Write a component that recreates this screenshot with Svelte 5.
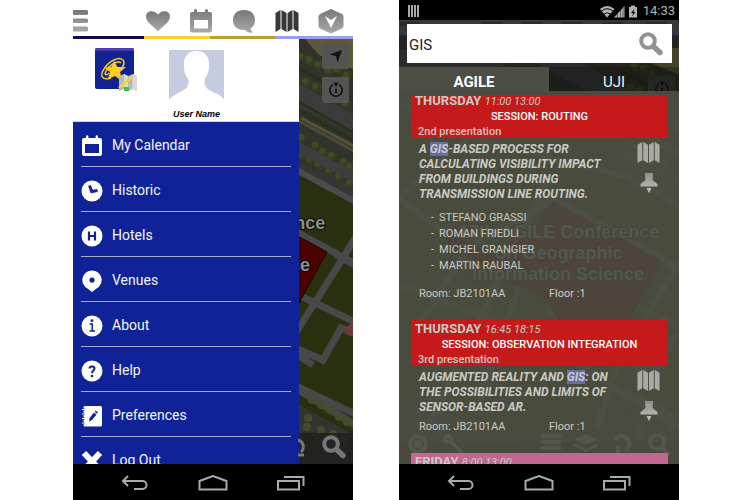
<script>
  const menu = [
    ['calendar', 'My Calendar'],
    ['clock', 'Historic'],
    ['hotel', 'Hotels'],
    ['venue', 'Venues'],
    ['info', 'About'],
    ['help', 'Help'],
    ['prefs', 'Preferences'],
    ['logout', 'Log Out']
  ];

  const talks = [
    {
      day: 'THURSDAY',
      time: '11:00 13:00',
      session: 'SESSION: ROUTING',
      order: '2nd presentation',
      title: ['A ', 'GIS', '-BASED PROCESS FOR CALCULATING VISIBILITY IMPACT FROM BUILDINGS DURING TRANSMISSION LINE ROUTING.'],
      authors: ['STEFANO GRASSI', 'ROMAN FRIEDLI', 'MICHEL GRANGIER', 'MARTIN RAUBAL'],
      room: 'JB2101AA',
      floor: '1'
    },
    {
      day: 'THURSDAY',
      time: '16:45 18:15',
      session: 'SESSION: OBSERVATION INTEGRATION',
      order: '3rd presentation',
      title: ['AUGMENTED REALITY AND ', 'GIS', ': ON THE POSSIBILITIES AND LIMITS OF SENSOR-BASED AR.'],
      authors: [],
      room: 'JB2101AA',
      floor: '1'
    }
  ];

  const trees = [
    [222, 49], [228, 57], [237, 60], [246, 65], [256, 71], [264, 70], [274, 76],
    [224, 79], [233, 82], [243, 87], [253, 92], [262, 99], [273, 104],
    [222, 135], [229, 138], [243, 146], [250, 152], [259, 156], [271, 162], [277, 167],
    [228, 155], [237, 160], [246, 165], [256, 171], [266, 177], [277, 183]
  ];
  const lowerTrees = [
    [239, 400], [248, 405], [257, 410], [266, 417], [274, 422],
    [235, 418], [234, 427], [248, 430], [260, 434], [271, 440]
  ];

  let query = $state('GIS');
</script>

{#snippet map(shift)}
  <svg class="map" viewBox="0 0 280 500" preserveAspectRatio="xMinYMin slice" aria-hidden="true">
    <g transform={shift}>
      <rect x="-20" y="-20" width="340" height="540" fill="#353633" />
      <path d="M-20 20L300 20V190L190 150L-20 40Z" fill="#30332a" />
      <path d="M232 39h48v30l-34-14z" fill="#5d5a37" />
      <path d="M-20 40L150 40L290 120V140L120 50L-20 90Z" fill="#3b3b3b" />
      <path d="M215 62L290 104M215 96L290 138M215 104L290 146" stroke="#26301a" stroke-width="3" />
      <path d="M215 115L290 156" stroke="#4d4b35" stroke-width="3" />
      <path d="M228 118L290 151" stroke="#56533a" stroke-width="3" />
      {#each trees as [x, y]}
        <circle cx={x} cy={y} r="5" fill="#333d1e" />
        <circle cx={x - 1} cy={y - 1} r="3" fill="#404a25" />
      {/each}
      <path d="M215 142L290 182" stroke="#3d3d3e" stroke-width="10" />
      <path d="M-20 110L190 150L290 205V500L-20 380Z" fill="#283010" />
      <path d="M-20 90L70 130L220 168L290 206" fill="none" stroke="#4b4b4b" stroke-width="6" />
      <path d="M-20 200L60 130M20 420L140 170M-20 180L60 240L146 190L290 268M-20 270L130 330L290 430M60 240L10 320M112 277L70 400M140 300L240 365M296 215L270 258L212 350L190 420M215 290L290 326M215 345L250 360L268 328L290 335M200 375L290 418M262 254L290 270" fill="none" stroke="#484848" stroke-width="7" />
      <path d="M205 393L290 440V500H170Z" fill="#33332f" />
      <path d="M146 193L254 252L225 305L212 330L152 311L138 289L123 279L110 277L41 234L43 226L88 246L123 226Z" fill="#4b0202" stroke="#190505" />
      <path d="M274 327L284 317V338L272 334Z" fill="#70393a" />
      {#each lowerTrees as [x, y]}
        <circle cx={x} cy={y} r="4" fill="#434d2a" />
      {/each}
      <g class="map-label">
        <text x="152" y="229">17th AGILE Conference</text>
        <text x="152" y="250">on Geographic</text>
        <text x="151" y="271">Information Science</text>
      </g>
      <path d="M-20 433H300V520H-20Z" fill="#20201e" opacity=".85" />
    </g>
  </svg>
{/snippet}

{#snippet lens(size)}
  <svg width={size} height={size} viewBox="0 0 24 24" aria-hidden="true">
    <circle cx="9" cy="9" r="6.8" fill="none" stroke="currentColor" stroke-width="4" />
    <path d="M14.5 14.5L21 20.500" stroke="currentColor" stroke-width="5.500" stroke-linecap="round" />
  </svg>
{/snippet}

{#snippet folded(size)}
  <svg width={size} height={size} viewBox="0 0 24 24" aria-hidden="true">
    <path d="M.5 4L5.5 1V20L.5 23zM6.5 1L11.5 4V23L6.5 20zM12.5 4L17.5 1V20L12.5 23zM18.5 1L23.5 4V23L18.5 20z" fill="currentColor" />
  </svg>
{/snippet}

{#snippet compass()}
  <svg width="18" height="18" viewBox="0 0 18 18" aria-hidden="true">
    <path d="M6 3.6A6.2 6.2 0 1 0 12 3.6" fill="none" stroke="currentColor" stroke-width="1.6" />
    <path d="M6.5 1.5h5L9 6zM8 8h2v4H8z" fill="currentColor" />
  </svg>
{/snippet}

{#snippet navbar()}
  <nav class="android" aria-label="System">
    <button aria-label="Back">
      <svg width="28" height="16" viewBox="0 0 28 16"><path d="M7 1L2 6L7 11M2 6H21.5A4 4 0 0 1 21.5 14H13" /></svg>
    </button>
    <button aria-label="Home">
      <svg width="30" height="16" viewBox="0 0 30 16"><path d="M1.5 14.5V6L15 1L28.5 6V14.5Z" /></svg>
    </button>
    <button aria-label="Recent apps">
      <svg width="28" height="16" viewBox="0 0 28 16"><path d="M1 6H22V14.5H1ZM7 2H26.5V11" /></svg>
    </button>
  </nav>
{/snippet}

{#snippet menuIcon(kind)}
  <svg width="22" height="22" viewBox="0 0 22 22" aria-hidden="true">
    {#if kind === 'calendar'}
      <path d="M3 3H5V1.5a1 1 0 0 1 2.4 0V3h7.200V1.500a1 1 0 0 1 2.400 0V3H19a2 2 0 0 1 2 2V19a2 2 0 0 1-2 2H3a2 2 0 0 1-2-2V5a2 2 0 0 1 2-2zM4 9V18H18V9z" fill="#fff" fill-rule="evenodd" />
    {:else if kind === 'venue'}
      <path d="M11 .5A9.600 9.600 0 0 1 15.500 18.600L11 22L6.500 18.600A9.600 9.600 0 0 1 11 .5zM11 7.500a2.600 2.600 0 1 0 .1 0z" fill="#fff" fill-rule="evenodd" />
    {:else if kind === 'prefs'}
      <path d="M4 1H19.500A1.500 1.500 0 0 1 21 2.500V20A1.500 1.500 0 0 1 19.500 21.500H4A1.500 1.500 0 0 1 2.500 20V2.500A1.500 1.500 0 0 1 4 1z" fill="#fff" />
      <path d="M0 4.500H3.500M0 9H3.500M0 13.500H3.500M0 18H3.500" stroke="#102298" stroke-width="2.400" />
      <path d="M1 4.500H5M1 9H5M1 13.500H5M1 18H5" stroke="#fff" />
      <path d="M8 16.500L8.500 13L13 7.500L15.500 9.500L11 15zM13.700 6.700L14.700 5.600L17 7.500L16.200 8.700z" fill="#102298" />
    {:else if kind === 'logout'}
      <path d="M3 3L19 20M19 3L3 20" stroke="#fff" stroke-width="6" />
    {:else}
      <circle cx="11" cy="11" r="10.500" fill="#fff" />
      {#if kind === 'clock'}
        <path d="M8.500 5.500L10.700 11.500L16.500 10.500" fill="none" stroke="#102298" stroke-width="3" />
      {:else if kind === 'hotel'}
        <path d="M8 6.500V15.500M14 6.500V15.500M8 11H14" stroke="#102298" stroke-width="2.200" />
      {:else if kind === 'info'}
        <path d="M8.500 9H11.200V16M8.500 16H14" fill="none" stroke="#102298" stroke-width="1.500" />
        <circle cx="11" cy="5.700" r="1.400" fill="#102298" />
      {:else}
        <path d="M8.500 8.500C8.500 5.800 13.500 5.800 13.500 8.500C13.500 10.500 11 10.600 11 13.200" fill="none" stroke="#102298" stroke-width="2" />
        <circle cx="11" cy="16" r="1.300" fill="#102298" />
      {/if}
    {/if}
  </svg>
{/snippet}

<svg class="defs" width="0" height="0" aria-hidden="true">
  <linearGradient id="metal" x2="0" y2="1"><stop stop-color="#777" /><stop offset="1" stop-color="#aaa" /></linearGradient>
  <linearGradient id="pale" x2="0" y2="1"><stop stop-color="#8d8e88" /><stop offset="1" stop-color="#c4c5be" /></linearGradient>
</svg>

<main>
  <section class="phone" aria-label="Main menu">
    <header class="toolbar">
      <button class="burger" aria-label="Menu">
        <svg width="15" height="22" viewBox="0 0 15 22"><path d="M0 0H13a2 2 0 0 1 0 5H0zM0 8.500H13a2 2 0 0 1 0 4.500H0zM0 16.500H13a2 2 0 0 1 0 5H0z" fill="url(#metal)" /></svg>
      </button>
      <div class="tools">
        <button aria-label="Favourites">
          <svg width="24" height="24" viewBox="0 0 24 24"><path d="M12 22.500C9 18 0 14 0 7.500C0 1 8.500 .5 12 5.500C15.500 .5 24 1 24 7.500C24 14 15 18 12 22.500z" fill="url(#metal)" /></svg>
        </button>
        <button aria-label="Calendar">
          <svg width="24" height="24" viewBox="0 0 24 24"><path d="M3 3H5V1.500a1.500 1.500 0 0 1 3 0V3h8V1.500a1.500 1.500 0 0 1 3 0V3h2a2 2 0 0 1 2 2V21.500a2 2 0 0 1-2 2H3a2 2 0 0 1-2-2V5a2 2 0 0 1 2-2zM5 11V19.500H19V11z" fill="url(#metal)" fill-rule="evenodd" /></svg>
        </button>
        <button aria-label="Messages">
          <svg width="24" height="24" viewBox="0 0 24 24"><path d="M12 1C19 1 23 5 23 11C23 15 21.500 17.500 18.500 19.500C18.500 21.500 20 22.500 21.500 23.500C18 24 14.500 23 13 21C5 21.500 1 17 1 11C1 5 5 1 12 1z" fill="url(#metal)" /></svg>
        </button>
        <button class="dark" aria-label="Map">{@render folded(24)}</button>
        <button aria-label="More">
          <svg width="26" height="26" viewBox="0 0 26 26"><path d="M13 1L24 6Q25.500 7 25.500 9V18Q25.500 19.500 24 20.500L13 25.500L2 20.500Q.5 19.500 .5 18V9Q.5 7 2 6z" fill="url(#metal)" /><path d="M7 8L13 12L19 8L13 20z" fill="#fff" /></svg>
        </button>
      </div>
    </header>
    <div class="stripe"><i></i><i></i><i></i><i></i></div>
    <div class="stage">
      <div class="backdrop left">{@render map('translate(0 -39)')}</div>
      <aside class="drawer">
        <div class="profile">
          <svg class="logo" width="44" height="45" viewBox="0 0 44 45" role="img" aria-label="App logo">
            <rect x="1" y="1" width="39" height="41" rx="2" fill="#112391" />
            <path d="M1 4V3q0-2 2-2H38q2 0 2 2V4z" fill="#4b3cae" />
            <path d="M17 31C7 34 6 28 10 22C15 14 25 9 29 13C32 17 28 21 26 23M15 26C12 29 10 28 12 24C16 17 24 13 27 16" fill="none" stroke="#f2cd23" stroke-width="1.500" />
            <path d="M20 14L23.500 20L32 20L26 25L28 34L21 29L14 32L16 25L10.500 20.500L17.500 20z" fill="#ffce22" />
            <path d="M25 29L30 27L34 29L39 27L43 29V44L38 42L34 44L30 42L25 44z" fill="#b9b9b1" />
            <path d="M30 27L34 29V44L30 42zM39 27L43 29V44L38 42z" fill="#dad9d4" />
            <path d="M25 41L39 29" stroke="#e4d94b" stroke-width="2.500" />
            <path d="M30 40h5v4h-5z" fill="#49bd45" />
          </svg>
          <figure>
            <svg width="55" height="50" viewBox="0 0 55 50" role="img" aria-label="Profile picture">
              <path d="M0 0H55V49L38 40L27 46L17 40L0 50z" fill="#c6cce0" />
              <path d="M27.500 1C36 1 41 7 40 16C40 22 38 25 36 29C34 36 38 39 44 42C49 44 53 46 55 50H0C3 46 7 44 11 42C18 39 21 35 19 29C16 25 15 21 15 16C14 7 19 1 27.500 1z" fill="#fff" />
            </svg>
            <figcaption>User Name</figcaption>
          </figure>
        </div>
        <nav class="menu" aria-label="Sections">
          {#each menu as [kind, label]}
            <a href="#{kind}">{@render menuIcon(kind)}<span>{label}</span></a>
          {/each}
        </nav>
      </aside>
      <div class="floating">
        <button aria-label="Locate me">
          <svg width="16" height="16" viewBox="0 0 16 16"><path d="M14 2L9.500 14.500L8 8L1.500 6.500z" fill="currentColor" /></svg>
        </button>
        <button aria-label="Compass">{@render compass()}</button>
      </div>
      <div class="bottom-tools">
        <svg width="10" height="24" viewBox="0 0 10 24" aria-hidden="true"><path d="M0 5A7 7 0 0 1 3 17M0 20H6" fill="none" stroke="currentColor" stroke-width="3" /></svg>
        <button aria-label="Search map">{@render lens(24)}</button>
      </div>
    </div>
    {@render navbar()}
  </section>

  <section class="phone search" aria-label="Search programme">
    <div class="status">
      <svg width="11" height="12" viewBox="0 0 11 12" aria-hidden="true"><path d="M1 0V12M4 0V12M7 0V12M10 0V12" stroke="#aaa" stroke-width="2" /></svg>
      <div class="signals">
        <svg width="38" height="13" viewBox="0 0 38 13" aria-hidden="true">
          <path d="M7 12.500L0 4Q7-2 14.500 4z" fill="#b5b5b5" />
          <path d="M1.500 6Q7 1.500 13 6M4 9Q7 6.500 10.500 9" fill="none" stroke="#000" />
          <path d="M14 12.500L24.500 1V12.500z" fill="#b5b5b5" />
          <path d="M17.500 8V13M20.500 5V13M23 2V13" stroke="#222" stroke-width=".6" />
          <path d="M29 2H31V.5H35V2H37V12.500H29z" fill="#b5b5b5" />
          <path d="M34.500 3.500L31 8H33L32 11.500L35.500 7H33.500z" fill="#111" />
        </svg>
        <time>14:33</time>
      </div>
    </div>
    <div class="stage">
      <div class="backdrop right">
        {@render map('translate(8 -11)')}
        <div class="ghost-bar">
          {#each [[1, 20], [83, 20], [123, 20], [163, 20], [204, 20], [247, 20]] as [x, w]}
            <i style="left:{x}px;width:{w}px"></i>
          {/each}
        </div>
        <div class="ghost-compass">{@render compass()}</div>
      </div>
      <form onsubmit={(e) => e.preventDefault()}>
        <input type="text" aria-label="Search" bind:value={query} />
        <button aria-label="Search">{@render lens(24)}</button>
      </form>
      <div class="tabs" role="tablist">
        <button role="tab" aria-selected="true">AGILE</button>
        <button role="tab" aria-selected="false">UJI</button>
      </div>
      <div class="results">
        <svg class="ghost-tools" width="280" height="24" viewBox="0 0 280 24" aria-hidden="true">
          <g fill="none" stroke="currentColor" stroke-width="4">
            <circle cx="19" cy="10" r="8" /><circle cx="19" cy="10" r="2" />
            <circle cx="49" cy="5" r="3" /><path d="M51 7L63 19" />
            <path d="M142 2H162M142 8H162M142 14H162" />
            <path d="M216 5A8 8 0 1 1 226 17M219 12V22" />
            <circle cx="258" cy="8" r="7" /><path d="M263 14L271 21" />
          </g>
          <path d="M187 0L199 5L187 11L175 5zM175 9L187 15L199 9V12L187 18L175 12z" fill="currentColor" />
        </svg>
        <div class="list">
          {#each talks as talk}
            <article>
              <header>
                <p class="when"><b>{talk.day}</b> <time>{talk.time}</time></p>
                <h3>{talk.session}</h3>
                <p class="order">{talk.order}</p>
              </header>
              <div class="body">
                <h2>{talk.title[0]}<mark>{talk.title[1]}</mark>{talk.title[2]}</h2>
                <div class="actions">
                  <button aria-label="Show on map">{@render folded(23)}</button>
                  <button aria-label="Pin">
                    <svg width="18" height="22" viewBox="0 0 18 22"><path d="M5 1H13V3L12.500 8L17.500 12V14.500H.5V12L5.500 8L5 3zM6.500 16H11.500L9 21z" fill="url(#pale)" /></svg>
                  </button>
                </div>
              </div>
              {#if talk.authors.length}
                <ul>
                  {#each talk.authors as author}<li>{author}</li>{/each}
                </ul>
              {/if}
              <p class="place"><span>Room: {talk.room}</span><span>Floor :{talk.floor}</span></p>
            </article>
          {/each}
          <article>
            <header class="pink"><p class="when"><b>FRIDAY</b> <time>8:00 13:00</time></p></header>
          </article>
        </div>
      </div>
    </div>
    {@render navbar()}
  </section>
</main>

<style>
  :global(body) { margin: 0; background: #fff; }
  main { display: flex; justify-content: center; gap: 46px; height: 100vh; padding-left: 2px; box-sizing: border-box; overflow: hidden; font-family: Roboto, "Liberation Sans", sans-serif; }
  button { border: 0; padding: 0; background: none; color: inherit; font: inherit; display: grid; place-items: center; }
  p, h2, h3, ul, figure { margin: 0; padding: 0; }
  svg { display: block; }
  .defs { position: absolute; }
  .phone { flex: 0 1 280px; display: flex; flex-direction: column; min-width: 0; background: #000; }
  .stage { position: relative; flex: 1; min-height: 0; overflow: hidden; display: flex; flex-direction: column; }
  .backdrop { position: absolute; inset: 0; overflow: hidden; }
  .map { width: 100%; height: 500px; }
  .map-label { font: bold 18px "Liberation Sans", Arial, sans-serif; text-anchor: middle; fill: #8b8b8b; stroke: #0d0d0d; stroke-width: 2px; paint-order: stroke; }

  .toolbar { height: 36px; flex: none; display: flex; align-items: center; justify-content: space-between; background: #fff; padding: 5px 9px 0 0; box-sizing: border-box; }
  .tools { display: flex; align-items: center; gap: 19px; }
  .dark { color: #383838; }
  .stripe { display: flex; height: 3px; flex: none; }
  .stripe i { flex: 66; background: #ffd02e; }
  .stripe i:nth-child(1) { flex: 70; background: #130a4e; }
  .stripe i:nth-child(3) { background: #b7a32c; }
  .stripe i:nth-child(4) { flex: 76; background: #9a9cf8; }

  .drawer { position: relative; width: 226px; height: 100%; display: flex; flex-direction: column; background: #102298; }
  .profile { display: flex; align-items: flex-start; gap: 31px; height: 83px; flex: none; box-sizing: border-box; padding: 8px 20px 0 21px; background: #fff; border-bottom: 1px solid #d5d5dc; }
  figure { padding-top: 3px; }
  figcaption { font: italic bold 9px/12px "Liberation Sans", Arial, sans-serif; text-align: center; margin-top: 8px; white-space: nowrap; }
  .menu { padding: 0 8px; }
  .menu a { display: flex; align-items: center; gap: 9px; height: 45px; box-sizing: border-box; padding-top: 1px; border-bottom: 1px solid #a7abd2; color: #f4f5fb; text-decoration: none; font-size: 14px; line-height: 20px; }
  .menu svg { flex: none; margin-top: 2px; }
  .floating { position: absolute; top: 4px; right: 4px; display: grid; gap: 8px; color: #111; }
  .floating button { width: 27px; height: 26px; border-radius: 2px; background: #545552; }
  .bottom-tools { position: absolute; right: 7px; bottom: 5px; display: flex; gap: 14px; color: #777; }

  .android { height: 36px; flex: none; display: flex; align-items: center; justify-content: space-between; padding: 2px 48px 0; box-sizing: border-box; background: #000; }
  .android path { fill: none; stroke: #aaa; stroke-width: 2; }

  .search { color: #c9cac4; }
  .status { height: 20px; flex: none; display: flex; align-items: center; justify-content: space-between; padding: 2px 4px 0 9px; box-sizing: border-box; color: #b5b5b5; font-size: 13px; line-height: 16px; }
  .signals { display: flex; align-items: center; gap: 5px; }
  .right::after { content: ""; position: absolute; inset: 17px 0 auto 0; height: 54px; background: #0004; }
  .ghost-bar { position: absolute; top: 0; left: 0; right: 0; height: 15px; background: #383838; border-bottom: 2px solid #1d1f45; }
  .ghost-bar i { position: absolute; top: 2px; height: 4px; background: #2a2a2a; }
  .ghost-compass { position: absolute; right: 4px; top: 56px; width: 27px; height: 26px; display: grid; place-items: center; background: #41423c; color: #111; border-radius: 2px; }
  form { position: relative; display: flex; flex: none; margin: 4px 7px 0 8px; height: 39px; background: #fff; color: #929292; padding-right: 9px; }
  input { flex: 1; min-width: 0; border: 0; outline: 0; padding: 2px 2px 0; background: none; color: #222; font: 15px Roboto, sans-serif; }
  .tabs { position: relative; display: flex; flex: none; height: 24px; margin-top: 4px; font-size: 15px; color: #eee; }
  .tabs button { flex: 130; padding-top: 6px; background: #1115; }
  .tabs button[aria-selected="true"] { flex: 150; background: #505148e8; font-weight: 700; color: #fff; }
  .results { position: relative; flex: 1; min-height: 0; background: #4d4e43e0; padding: 4px 11px 0 12px; display: flex; }
  .list { position: relative; flex: 1; min-width: 0; overflow: hidden; }
  .list > :first-child { margin-top: -3px; }
  article { margin-bottom: 18px; }
  article header { height: 46px; box-sizing: border-box; padding: 1px 4px 0; background: #c51a19; }
  article header.pink { background: #c2678f; }
  .when { font-size: 13px; line-height: 15px; }
  .when time { font-size: 11px; font-style: italic; }
  h3 { font-size: 11px; line-height: 16px; font-weight: 500; color: #fff; text-align: center; }
  .order { font-size: 11px; line-height: 14px; font-weight: 500; padding-left: 3px; }
  .body { display: flex; justify-content: space-between; padding: 4px 8px 0 8px; }
  h2 { width: 196px; font-size: 12px; line-height: 15px; font-weight: 700; font-style: italic; }
  mark { background: #696aa8; color: inherit; }
  .actions { display: grid; gap: 9px; align-content: start; justify-items: center; height: 45px; color: #a9aaa3; }
  .actions svg { margin-top: -1px; }
  ul { list-style: none; padding: 8px 0 0 20px; font-size: 11px; line-height: 16px; }
  li { display: flex; gap: 5px; }
  li::before { content: "-"; }
  .place { display: flex; font-size: 11px; line-height: 16px; padding: 4px 0 0 8px; }
  ul + .place { padding-top: 12px; }
  .place span:first-child { width: 130px; }
  .ghost-tools { position: absolute; left: 0; bottom: 6px; color: #5d5e54; opacity: .6; pointer-events: none; }
</style>
